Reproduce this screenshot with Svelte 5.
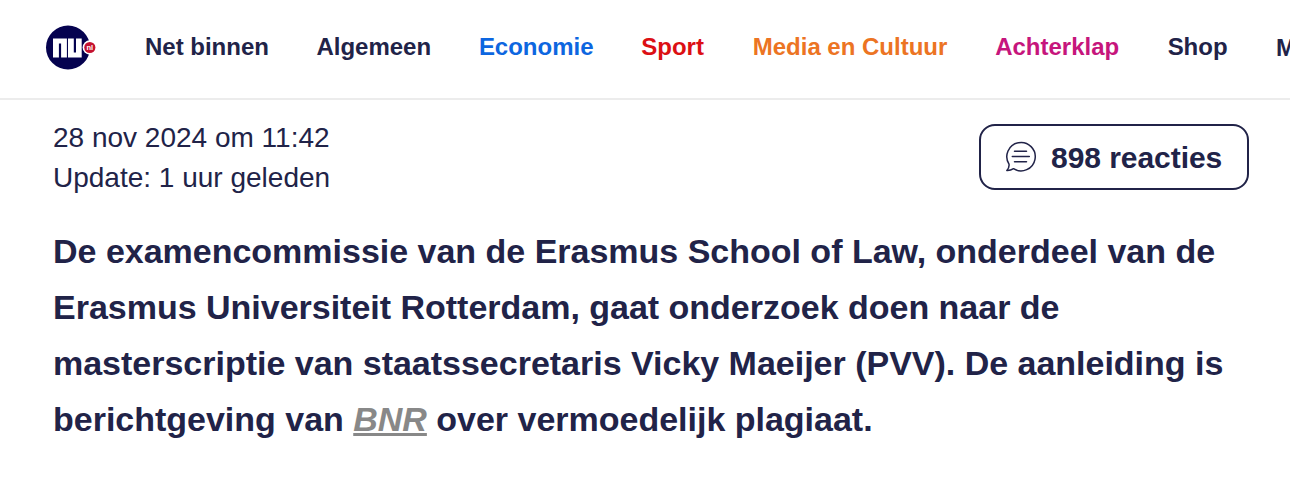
<script>
  const links = [
    { label: 'Net binnen', color: '#212348', width: 123 },
    { label: 'Algemeen', color: '#212348', width: 114 },
    { label: 'Economie', color: '#0d66e0', width: 114 },
    { label: 'Sport', color: '#dc0f14', width: 63 },
    { label: 'Media en Cultuur', color: '#ec7423', width: 194 },
    { label: 'Achterklap', color: '#c6157c', width: 124 },
    { label: 'Shop', color: '#212348', width: 60 },
    { label: 'M', color: '#212348', width: 20 }
  ];

  const intro = [
    'De examencommissie van de Erasmus School of Law, onderdeel van de',
    'Erasmus Universiteit Rotterdam, gaat onderzoek doen naar de',
    'masterscriptie van staatssecretaris Vicky Maeijer (PVV). De aanleiding is'
  ];
</script>

<header>
  <a class="logo" href="/" aria-label="NU.nl">
    <svg width="52" height="46" viewBox="0 0 52 46">
      <circle cx="23" cy="23.500" r="22" fill="#05024f" />
      <path d="M8 33.500V14.500H21.900v19h-5.800V19.500h-2.200v14z" fill="#fff" />
      <path d="M23 14.500h5.800v14h2.200V14.500H36.700v19H23z" fill="#fff" />
      <circle cx="44.800" cy="23.500" r="7.200" fill="#fff" />
      <circle cx="44.800" cy="23.500" r="5.600" fill="#c41230" />
      <text x="44.800" y="26.100" text-anchor="middle">nl</text>
    </svg>
  </a>
  <nav>
    {#each links as link}
      <a href="/" style="color: {link.color}; width: {link.width}px">{link.label}</a>
    {/each}
  </nav>
</header>

<main>
  <div class="meta">
    <div class="dates">
      <div>28 nov 2024 om 11:42</div>
      <div>Update: 1 uur geleden</div>
    </div>
    <button>
      <svg width="32" height="32" viewBox="0 0 32 32" fill="none" stroke="#212348" stroke-width="1.500" stroke-linecap="round" stroke-linejoin="round">
        <path d="M4 23.200A14.200 14.200 0 1 1 8.500 27.700Q5.500 29.700 1.800 29.500Q4.500 27 4 23.200z" />
        <path d="M9.500 10.200h12M7.300 15.500h17M9.500 20.800h12" />
      </svg>
      <span>898 reacties</span>
    </button>
  </div>
  <p>
    {#each intro as line}
      {line}<br />
    {/each}
    berichtgeving van <a href="/">BNR</a> over vermoedelijk plagiaat.
  </p>
</main>

<style>
  :global(body) {
    overflow: hidden;
    background: #fff;
    font-family: 'Liberation Sans', Arial, sans-serif;
    color: #212348;
  }
  header {
    display: flex;
    align-items: center;
    box-sizing: border-box;
    height: 100px;
    padding: 0 0 5px 45px;
    border-bottom: 2px solid #ececec;
  }
  .logo {
    display: flex;
    width: 52px;
    margin-right: 48px;
    flex-shrink: 0;
  }
  .logo text {
    fill: #fff;
    font-size: 7.500px;
    font-weight: bold;
  }
  nav {
    display: flex;
    gap: 48.450px;
  }
  nav a {
    flex-shrink: 0;
    font-size: 24px;
    font-weight: bold;
    letter-spacing: -0.010px;
    text-decoration: none;
    white-space: nowrap;
  }
  nav a:last-child {
    position: relative;
    top: 1px;
  }
  main {
    padding: 0 41px 0 53px;
  }
  .meta {
    display: flex;
    justify-content: space-between;
    align-items: flex-start;
  }
  .dates {
    padding-top: 18px;
    font-size: 28px;
    line-height: 40px;
  }
  button {
    display: flex;
    align-items: center;
    gap: 14px;
    box-sizing: border-box;
    width: 270px;
    height: 66px;
    margin-top: 24px;
    padding: 0 0 0 24px;
    border: 2px solid #212348;
    border-radius: 16px;
    background: #fff;
    color: inherit;
    font: bold 30px 'Liberation Sans', Arial, sans-serif;
    white-space: nowrap;
  }
  button span {
    padding-top: 2px;
    letter-spacing: -0.050px;
  }
  p {
    margin: 25px 0 0;
    font-size: 34px;
    font-weight: bold;
    line-height: 56px;
    letter-spacing: -0.010px;
    white-space: nowrap;
  }
  p a {
    color: #888;
    font-style: italic;
    text-decoration-thickness: 3px;
    text-decoration-skip-ink: none;
    text-underline-offset: 2px;
  }
</style>
